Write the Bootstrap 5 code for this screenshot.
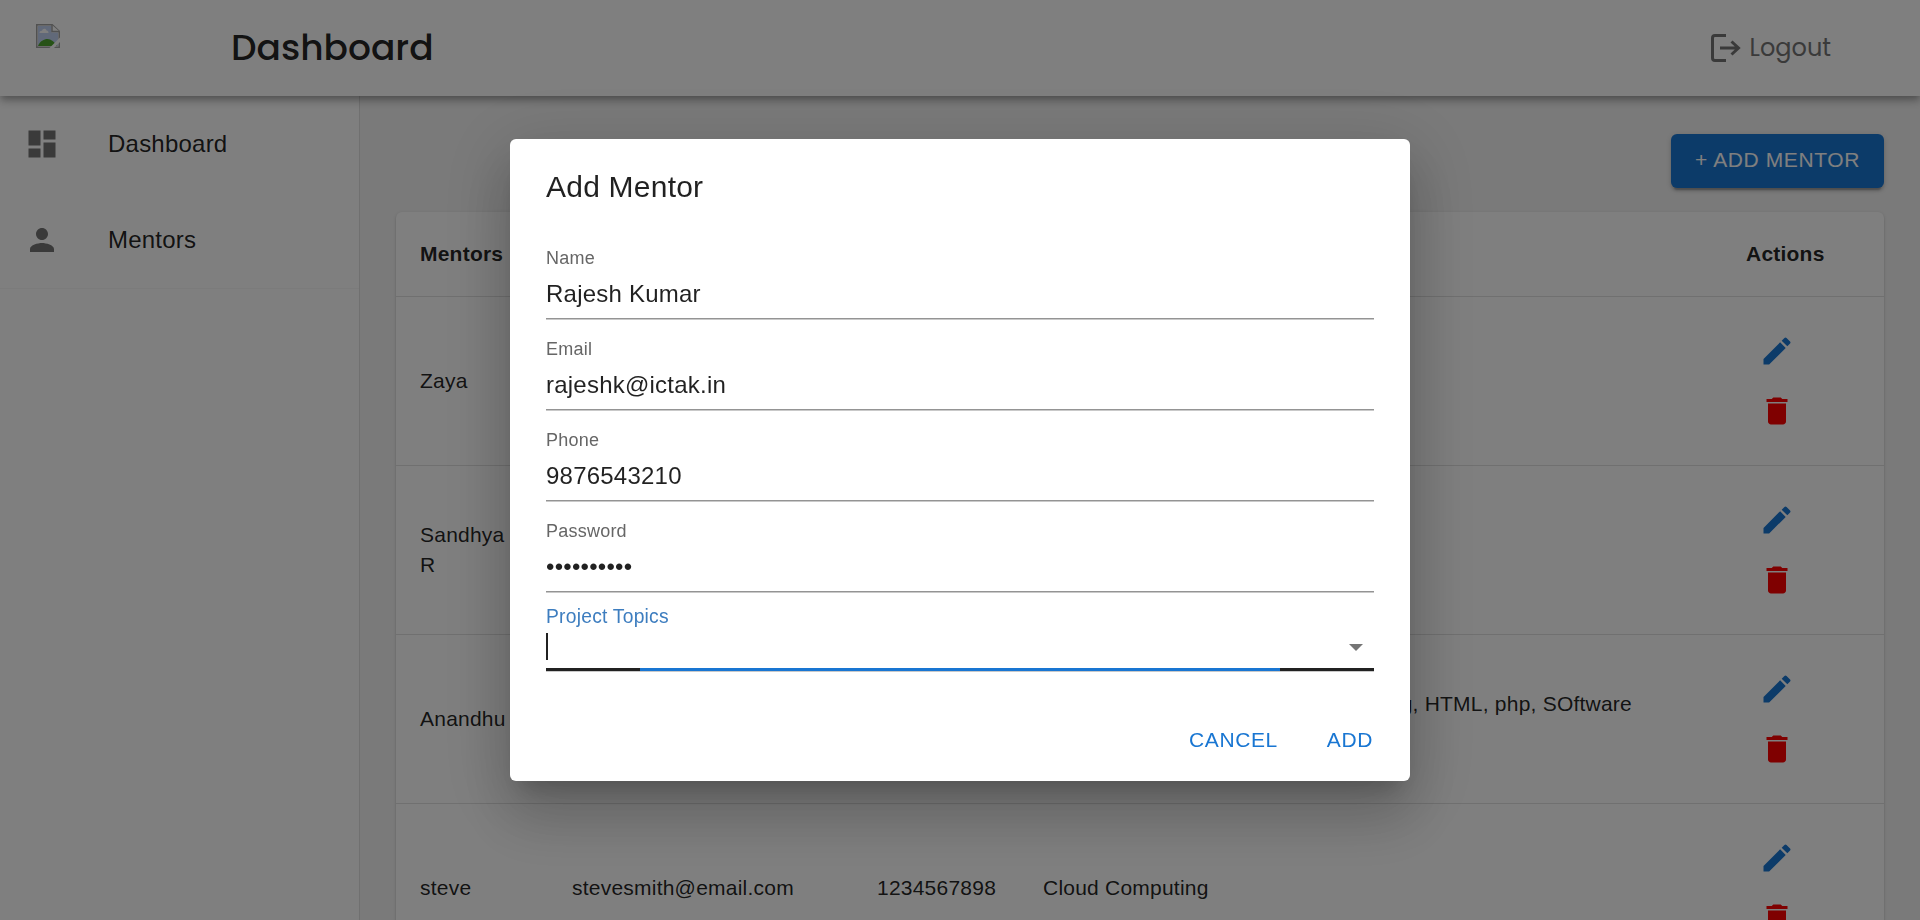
<!DOCTYPE html>
<html lang="en">
<head>
<meta charset="utf-8">
<title>Dashboard</title>
<link rel="stylesheet" href="https://cdn.jsdelivr.net/npm/bootstrap@5.3.0/dist/css/bootstrap.min.css">
<style>
  body { font-family: "Liberation Sans", Arial, sans-serif; color: rgba(0,0,0,.87); background: #f5f5f5; font-size: 24px; line-height: 36px; letter-spacing: .00938em; }
  .app { height: 920px; }
  .brand-font { font-family: Poppins, Inter, sans-serif; font-feature-settings: "cv11"; }
  .topbar { height: 96px; z-index: 2; box-shadow: 0 3px 6px -1.5px rgba(0,0,0,.2), 0 6px 7.5px rgba(0,0,0,.14), 0 1.5px 15px rgba(0,0,0,.12); padding: 0 36px; }
  .page-title { font-size: 36px; font-weight: 500; margin-left: 171px; letter-spacing: 0; }
  .broken { width: 24px; height: 24px; margin-bottom: 24px; }
  .logout { color: #757575; font-size: 24px; gap: 9px; margin-right: 53px; letter-spacing: 0; }
  .shell { height: 824px; }
  .side { width: 360px; border-right: 1px solid #e0e0e0; }
  .side-item { height: 96px; padding-left: 24px; gap: 48px; }
  .side-item span { margin-top: -1px; }
  .side-rule { height: 1px; background: #f7f7f7; }
  .glyph { width: 36px; height: 36px; fill: currentColor; flex: none; display: block; }
  .muted-icon { color: #757575; }
  .main-area { padding: 38px 36px 0; min-width: 0; }
  .caps { font-size: 21px; line-height: 36px; letter-spacing: .02857em; }
  .btn-add { background: #1976d2; color: #fff; height: 54px; padding: 8px 24px 10px; border-radius: 6px; border: 0; box-shadow: 0 4.5px 1.5px -3px rgba(0,0,0,.2), 0 3px 3px rgba(0,0,0,.14), 0 1.5px 7.5px rgba(0,0,0,.12); margin-bottom: 24px; }
  .sheet { border-radius: 6px; box-shadow: 0 3px 1.5px -1.5px rgba(0,0,0,.2), 0 1.5px 1.5px rgba(0,0,0,.14), 0 1.5px 4.5px rgba(0,0,0,.12); }
  .mentors { table-layout: fixed; font-size: 21px; line-height: 30px; letter-spacing: .01071em; color: inherit; --bs-table-bg: transparent; --bs-table-color: inherit; }
  .mentors > :not(caption) > * > * { padding: 24px; border-bottom: 1px solid #e0e0e0; color: rgba(0,0,0,.87); box-shadow: none; }
  .mentors th { line-height: 36px; font-weight: 700; }
  .mentors tbody td { height: 169px; }
  .act { padding: 12px 12px 12px 13px; width: 61px; height: 60px; }
  .act-edit { color: #1976d2; }
  .act-del { color: #f00; }
  .topics { padding-right: 66px; }
  .scrim { z-index: 10; }
  .dlg { width: 900px; height: 642px; border-radius: 6px; box-shadow: 0 16.5px 22.5px -10.5px rgba(0,0,0,.2), 0 36px 57px 4.5px rgba(0,0,0,.14), 0 13.5px 69px 12px rgba(0,0,0,.12); padding: 24px 36px 0; }
  .dlg-title { font-size: 30px; line-height: 48px; letter-spacing: .0075em; font-weight: 400; margin-bottom: 25px; }
  .entry { height: 91px; }
  .entry-label { font-size: 18px; line-height: 24px; color: #666; padding-top: 10px; height: 34px; }
  .entry-value { height: 49px; line-height: 48px; border-bottom: 1px solid #949494; box-shadow: 0 1px 0 #c9c9c9; }
  .topic-label { font-size: 19.3px; line-height: 24px; color: #3d7dbf; padding-top: 5px; height: 33px; }
  .topic-value { height: 35px; }
  .caret { width: 2px; height: 27px; background: #212121; }
  .drop { width: 14px; height: 7px; margin: 11px 11px 0 0; }
  .topic-line { height: 4px; background: #212121; border-bottom: 1px solid #c9c9c9; }
  .topic-line div { width: 640px; height: 3px; background: #1976d2; }
  .dlg-actions { color: #1976d2; gap: 49px; margin-top: 50px; padding-right: 1px; }
</style>
<script src="https://cdn.jsdelivr.net/npm/bootstrap@5.3.0/dist/js/bootstrap.bundle.min.js"></script>
</head>
<body>
<svg class="d-none">
  <symbol id="edit" viewBox="0 0 24 24"><path d="M3 17.25V21h3.75L17.81 9.94l-3.75-3.75L3 17.25zM20.71 7.04c.39-.39.39-1.02 0-1.41l-2.34-2.34a.9959.9959 0 0 0-1.41 0l-1.83 1.83 3.75 3.75 1.83-1.83z"/></symbol>
  <symbol id="del" viewBox="0 0 24 24"><path d="M6 19c0 1.1.9 2 2 2h8c1.1 0 2-.9 2-2V7H6v12zM19 4h-3.500l-1-1h-5l-1 1H5v2h14V4z"/></symbol>
</svg>

<div class="app overflow-hidden">
<header class="topbar bg-white position-relative d-flex align-items-center">
  <svg class="broken" viewBox="0 0 24 24">
    <path d="M.75.75h15.500l7 6.500v16H.75z" fill="#fff" stroke="#a3a3a3" stroke-width="1.500"/>
    <path d="M2 2h13.500v6.500H22v13.500H2z" fill="#c3d3f3"/>
    <path d="M3.500 9c0-2 2-2.500 2.500-2 .5-3 4-3 4.500-.5 1.500 0 2 1 2 2.500z" fill="#fff"/>
    <path d="M2 22c2-5 6-7 9.500-7s7 3 9.500 7z" fill="#4ea52e"/>
    <path d="M16 1v6.500h7.500" fill="#fff" stroke="#a3a3a3" stroke-width="1.500"/>
    <path d="M13 24.500 25 12.500v4.500L17.500 24.500z" fill="#fff"/>
  </svg>
  <div class="page-title brand-font">Dashboard</div>
  <div class="logout brand-font d-flex align-items-center ms-auto">
    <svg width="30" height="28" viewBox="0 0 30 28" fill="none" stroke="currentColor" stroke-width="3"><path d="M15 1.500H4Q1.500 1.500 1.500 4v20q0 2.500 2.500 2.500h11M9 14h18M20.500 7.500 27.500 14l-7 6.500"/></svg>
    <span>Logout</span>
  </div>
</header>

<div class="shell d-flex">
  <nav class="side bg-white flex-shrink-0">
    <div class="side-item d-flex align-items-center"><svg class="glyph muted-icon" viewBox="0 0 24 24"><path d="M3 13h8V3H3v10zm0 8h8v-6H3v6zm10 0h8V11h-8v10zm0-18v6h8V3h-8z"/></svg><span>Dashboard</span></div>
    <div class="side-item d-flex align-items-center"><svg class="glyph muted-icon" viewBox="0 0 24 24"><path d="M12 12c2.210 0 4-1.790 4-4s-1.790-4-4-4-4 1.790-4 4 1.790 4 4 4zm0 2c-2.670 0-8 1.340-8 4v2h16v-2c0-2.660-5.330-4-8-4z"/></svg><span>Mentors</span></div>
    <div class="side-rule"></div>
  </nav>
  <main class="main-area flex-grow-1">
    <div class="d-flex justify-content-end"><button class="btn-add caps">+ ADD MENTOR</button></div>
    <div class="sheet bg-white">
      <table class="table mentors mb-0 align-middle">
        <colgroup><col style="width:152px"><col style="width:305px"><col style="width:166px"><col style="width:703px"><col style="width:162px"></colgroup>
        <thead><tr><th>Mentors</th><th></th><th></th><th></th><th>Actions</th></tr></thead>
        <tbody>
          <tr><td>Zaya</td><td></td><td></td><td></td><td><div class="act act-edit"><svg class="glyph"><use href="#edit"/></svg></div><div class="act act-del"><svg class="glyph"><use href="#del"/></svg></div></td></tr>
          <tr><td>Sandhya<br>R</td><td></td><td></td><td></td><td><div class="act act-edit"><svg class="glyph"><use href="#edit"/></svg></div><div class="act act-del"><svg class="glyph"><use href="#del"/></svg></div></td></tr>
          <tr><td>Anandhu</td><td></td><td></td><td><div class="topics text-end">Learning, HTML, php, SOftware</div>&nbsp;</td><td><div class="act act-edit"><svg class="glyph"><use href="#edit"/></svg></div><div class="act act-del"><svg class="glyph"><use href="#del"/></svg></div></td></tr>
          <tr><td>steve</td><td>stevesmith@email.com</td><td>1234567898</td><td>Cloud Computing</td><td><div class="act act-edit"><svg class="glyph"><use href="#edit"/></svg></div><div class="act act-del"><svg class="glyph"><use href="#del"/></svg></div></td></tr>
        </tbody>
      </table>
    </div>
  </main>
</div>
</div>

<div class="scrim position-fixed top-0 start-0 w-100 h-100 bg-black bg-opacity-50 d-flex align-items-center justify-content-center">
  <section class="dlg bg-white">
    <h2 class="dlg-title">Add Mentor</h2>
    <div class="entry"><div class="entry-label">Name</div><div class="entry-value">Rajesh Kumar</div></div>
    <div class="entry"><div class="entry-label">Email</div><div class="entry-value">rajeshk@ictak.in</div></div>
    <div class="entry"><div class="entry-label">Phone</div><div class="entry-value">9876543210</div></div>
    <div class="entry"><div class="entry-label">Password</div><div class="entry-value">••••••••••</div></div>
    <div class="topic-label">Project Topics</div>
    <div class="topic-value d-flex justify-content-between"><span class="caret"></span><svg class="drop" viewBox="0 0 14 7"><path d="M0 0h14L7 7z" fill="#757575"/></svg></div>
    <div class="topic-line d-flex justify-content-center"><div></div></div>
    <div class="dlg-actions caps d-flex justify-content-end"><span>CANCEL</span><span>ADD</span></div>
  </section>
</div>
</body>
</html>
